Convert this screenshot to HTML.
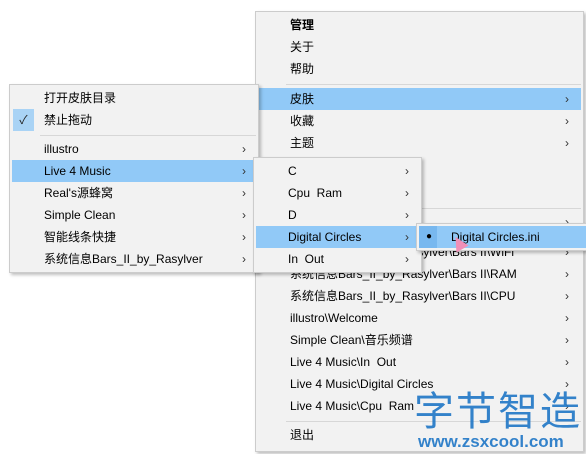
<!DOCTYPE html>
<html><head><meta charset="utf-8"><style>
body{margin:0;width:586px;height:454px;background:#fff;position:relative;overflow:hidden;font-family:"Liberation Sans","Noto Sans CJK SC",sans-serif;font-size:12px;color:#000}
.m{position:absolute;background:#f2f2f2;border:1px solid #ccc;box-shadow:2px 2px 3px rgba(0,0,0,.25)}
.r{position:absolute;left:0;right:0;height:22px;line-height:22px}
.r span{position:absolute}
.r i{position:absolute;font-style:normal;font-size:12px;color:#333}
.h{background:#91c9f7}
.s{position:absolute;height:1px;background:#d7d7d7}
</style></head><body>

<div class="m" style="left:255px;top:11px;width:327px;height:439px">
 <div class="r" style="top:2px"><span style="left:34px;font-weight:bold">管理</span></div>
 <div class="r" style="top:24px"><span style="left:34px">关于</span></div>
 <div class="r" style="top:46px"><span style="left:34px">帮助</span></div>
 <div class="s" style="left:30px;right:2px;top:72px"></div>
 <div class="r h" style="top:76px;left:2px;right:2px"><span style="left:32px">皮肤</span><i style="right:12px">›</i></div>
 <div class="r" style="top:98px"><span style="left:34px">收藏</span><i style="right:14px">›</i></div>
 <div class="r" style="top:120px"><span style="left:34px">主题</span><i style="right:14px">›</i></div>
 <div class="s" style="left:30px;right:2px;top:196px"></div>
 <div class="r" style="top:199px"><i style="right:14px">›</i></div>
 <div class="r" style="top:229px"><span style="left:34px">系统信息Bars_II_by_Rasylver\Bars II\WiFi</span><i style="right:14px">›</i></div>
 <div class="r" style="top:251px"><span style="left:34px">系统信息Bars_II_by_Rasylver\Bars II\RAM</span><i style="right:14px">›</i></div>
 <div class="r" style="top:273px"><span style="left:34px">系统信息Bars_II_by_Rasylver\Bars II\CPU</span><i style="right:14px">›</i></div>
 <div class="r" style="top:295px"><span style="left:34px">illustro\Welcome</span><i style="right:14px">›</i></div>
 <div class="r" style="top:317px"><span style="left:34px">Simple Clean\音乐频谱</span><i style="right:14px">›</i></div>
 <div class="r" style="top:339px"><span style="left:34px">Live 4 Music\In&nbsp; Out</span><i style="right:14px">›</i></div>
 <div class="r" style="top:361px"><span style="left:34px">Live 4 Music\Digital Circles</span><i style="right:14px">›</i></div>
 <div class="r" style="top:383px"><span style="left:34px">Live 4 Music\Cpu&nbsp; Ram</span><i style="right:14px">›</i></div>
 <div class="s" style="left:30px;right:2px;top:409px"></div>
 <div class="r" style="top:412px"><span style="left:34px">退出</span></div>
</div>

<div class="m" style="left:9px;top:84px;width:248px;height:187px">
 <div class="r" style="top:2px"><span style="left:34px">打开皮肤目录</span></div>
 <div style="position:absolute;left:3px;top:24px;width:21px;height:22px;background:#a9d3f5;text-align:center;line-height:22px;font-size:12px;color:#222">✓</div>
 <div class="r" style="top:24px"><span style="left:34px">禁止拖动</span></div>
 <div class="s" style="left:30px;right:2px;top:50px"></div>
 <div class="r" style="top:53px"><span style="left:34px">illustro</span><i style="right:12px">›</i></div>
 <div class="r h" style="top:75px;left:2px;right:2px"><span style="left:32px">Live 4 Music</span><i style="right:10px">›</i></div>
 <div class="r" style="top:97px"><span style="left:34px">Real's源蜂窝</span><i style="right:12px">›</i></div>
 <div class="r" style="top:119px"><span style="left:34px">Simple Clean</span><i style="right:12px">›</i></div>
 <div class="r" style="top:141px"><span style="left:34px">智能线条快捷</span><i style="right:12px">›</i></div>
 <div class="r" style="top:163px"><span style="left:34px">系统信息Bars_II_by_Rasylver</span><i style="right:12px">›</i></div>
</div>

<div class="m" style="left:253px;top:157px;width:167px;height:114px">
 <div class="r" style="top:2px"><span style="left:34px">C</span><i style="right:12px">›</i></div>
 <div class="r" style="top:24px"><span style="left:34px">Cpu&nbsp; Ram</span><i style="right:12px">›</i></div>
 <div class="r" style="top:46px"><span style="left:34px">D</span><i style="right:12px">›</i></div>
 <div class="r h" style="top:68px;left:2px;right:2px"><span style="left:32px">Digital Circles</span><i style="right:10px">›</i></div>
 <div class="r" style="top:90px"><span style="left:34px">In&nbsp; Out</span><i style="right:12px">›</i></div>
</div>

<div class="m" style="left:416px;top:223px;width:172px;height:26px">
 <div class="r h" style="top:2px;left:2px;right:0"><span style="left:0;width:18px;height:22px;background:#78b8ef"></span><span style="left:7px;top:0;font-size:10px">●</span><span style="left:32px">Digital Circles.ini</span></div>
</div>
<div style="position:absolute;left:452px;top:236px;width:0;height:0;border-left:7px solid transparent;border-right:7px solid transparent;border-bottom:14px solid #f08fb8;transform:rotate(-30deg)"></div>

<div style="position:absolute;left:414px;top:384px;font-size:40px;line-height:48px;color:#1f76c6;font-family:'Noto Sans CJK SC',sans-serif;letter-spacing:2px;opacity:.9">字节智造</div>
<div style="position:absolute;left:418px;top:432px;font-size:17px;line-height:20px;color:#1f76c6;font-weight:bold;opacity:.9">www.zsxcool.com</div>
</body></html>
